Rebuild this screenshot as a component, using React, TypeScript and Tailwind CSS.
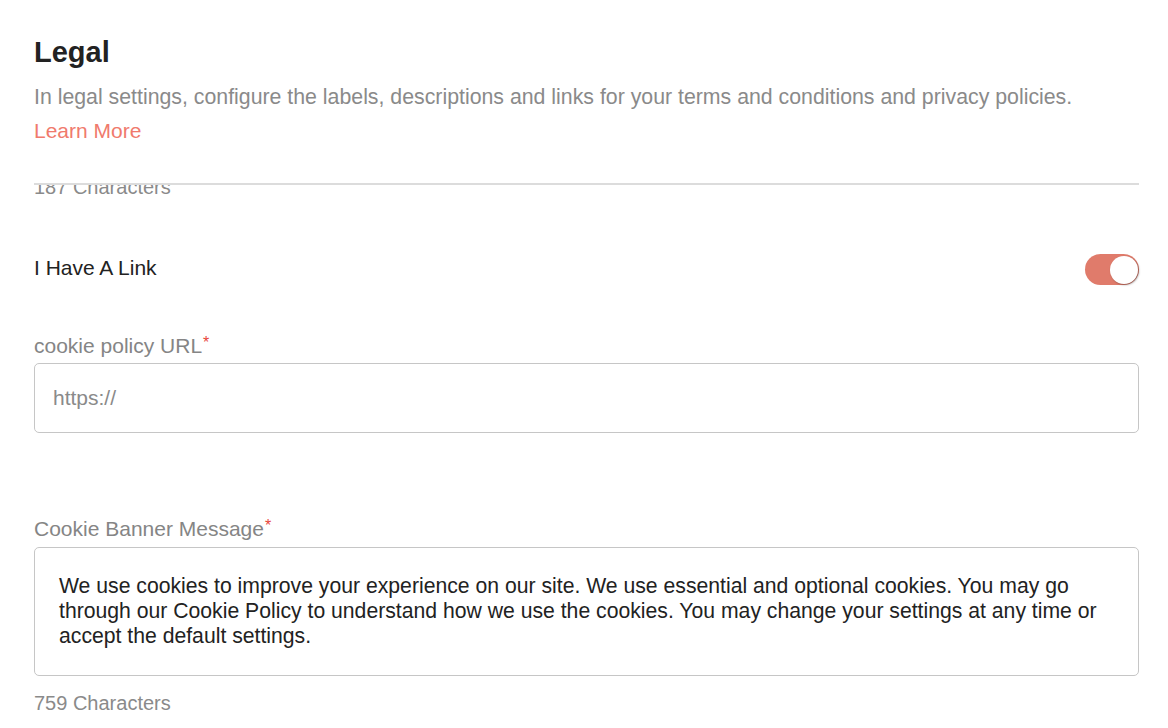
import React from "react";

function Label({ text }: { text: string }) {
  return (
    <div className="h-[24px] text-[21px] leading-[24px] text-[#858585]">
      {text}
      <span className="relative top-[1px] ml-[1px] align-top text-[16px] leading-none text-[#e8463a]">*</span>
    </div>
  );
}

export default function App() {
  return (
    <div
      className="h-[728px] w-[1168px] overflow-hidden bg-white flex flex-col"
      style={{ fontFamily: '"Liberation Sans", Arial, sans-serif' }}
    >
      <div className="mx-[34px] w-[1105px] border-b-2 border-[#dcdcdc] bg-white pt-[36px] pb-[40px] relative z-10">
        <h1 className="text-[29px] leading-[32px] font-semibold text-[#222222]">Legal</h1>
        <p className="mt-[17px] text-[21.3px] leading-[24px] text-[#8a8a8a] whitespace-nowrap">
          In legal settings, configure the labels, descriptions and links for your terms and conditions and privacy policies.
        </p>
        <a className="mt-[10px] block text-[21px] leading-[24px] text-[#f07a6d]">Learn More</a>
      </div>
      <div className="mx-[34px] w-[1105px] flex-1 flex flex-col">
        <div className="-mt-[10px] text-[20px] leading-[24px] text-[#8a8a8a]">187 Characters</div>
        <div className="mt-[55px] flex h-[31px] items-center justify-between">
          <span className="-mt-[3px] text-[21px] leading-[24px] text-[#222222]">I Have A Link</span>
          <div className="flex h-[31px] w-[54px] items-center justify-end rounded-full bg-[#e07b6b] pr-[1px]">
            <div className="h-[28px] w-[28px] rounded-full bg-white shadow-[1px_1px_2px_rgba(0,0,0,0.35)]" />
          </div>
        </div>
        <div className="mt-[49px]">
          <Label text="cookie policy URL" />
        </div>
        <div className="mt-[5px] flex h-[70px] items-center rounded-[5px] border border-[#c6c6c6] pl-[18px] text-[21px] text-[#8a8a8a]">
          <span className="-mt-[1px]">https://</span>
        </div>
        <div className="mt-[84px]">
          <Label text="Cookie Banner Message" />
        </div>
        <div className="mt-[6px] h-[129px] rounded-[5px] border border-[#c6c6c6] pl-[24px] pr-[20px] pt-[25px] text-[21.2px] leading-[25px] text-[#222222] whitespace-nowrap">
          We use cookies to improve your experience on our site. We use essential and optional cookies. You may go
          <br />
          through our Cookie Policy to understand how we use the cookies. You may change your settings at any time or
          <br />
          accept the default settings.
        </div>
        <div className="mt-[15px] text-[20px] leading-[24px] text-[#8a8a8a]">759 Characters</div>
      </div>
    </div>
  );
}
